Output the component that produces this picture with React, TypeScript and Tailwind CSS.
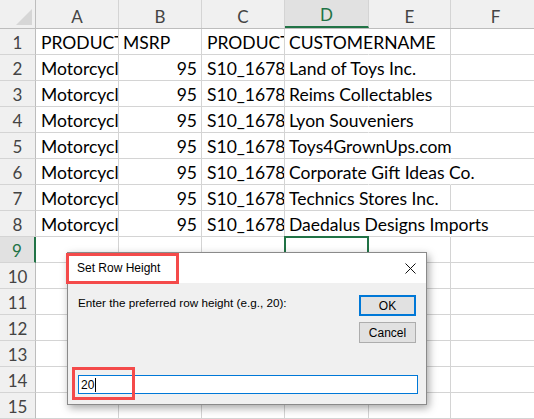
import React from "react";

const COLS = [
  { key: "A", w: "w-[83px]" },
  { key: "B", w: "w-[83px]" },
  { key: "C", w: "w-[83px]" },
  { key: "D", w: "w-[84px]" },
  { key: "E", w: "w-[82px]" },
  { key: "F", w: "w-[90px]" },
];

const CUSTOMERS = [
  "CUSTOMERNAME",
  "Land of Toys Inc.",
  "Reims Collectables",
  "Lyon Souveniers",
  "Toys4GrownUps.com",
  "Corporate Gift Ideas Co.",
  "Technics Stores Inc.",
  "Daedalus Designs Imports",
];

// rows where the customer name runs past column E into F
const OVER_F = [5, 6, 8];

const cellFont = { fontFamily: "Lato, 'Noto Sans', sans-serif" };

function Row({ n }: { n: number }) {
  const hasData = n <= 8;
  const header = n === 1;
  const selectedRow = n === 9;
  const cell = "shrink-0 flex items-end pb-[2px] text-[17.5px] leading-[18px] text-black whitespace-nowrap";
  return (
    <div className="flex h-[26px] shrink-0">
      <div
        className={`w-[36px] shrink-0 flex items-end justify-center pb-[2px] leading-[18px] text-[17px] border-b border-[#d4d4d4] ${
          selectedRow
            ? "bg-[#e1e1e1] text-[#217346] border-r-2 border-r-[#217346]"
            : "bg-[#f0f0f0] text-[#444] border-r border-r-[#bdbdbd]"
        }`}
      >
        {n}
      </div>
      {/* A */}
      <div className={`w-[83px] border-r border-b border-[#d4d4d4] overflow-hidden pl-[5px] ${cell}`}>
        {hasData ? (header ? "PRODUCTLINE" : "Motorcycles") : ""}
      </div>
      {/* B */}
      <div
        className={`w-[83px] border-r border-b border-[#d4d4d4] overflow-hidden ${cell} ${
          header ? "justify-start pl-[4px]" : "justify-end pr-[4px]"
        }`}
      >
        {hasData ? (header ? "MSRP" : "95") : ""}
      </div>
      {/* C */}
      <div className={`w-[83px] border-r border-b border-[#d4d4d4] overflow-hidden pl-[5px] ${cell}`}>
        {hasData ? (header ? "PRODUCTCODE" : "S10_1678") : ""}
      </div>
      {/* D */}
      <div
        className={`relative w-[84px] border-b border-[#d4d4d4] pl-[4px] ${cell} ${
          hasData ? "border-r border-r-transparent" : "border-r border-r-[#d4d4d4]"
        }`}
      >
        {hasData && <span className="relative z-10">{CUSTOMERS[n - 1]}</span>}
        {selectedRow && (
          <div className="absolute -left-[1px] -top-[1px] w-[85px] h-[27px] border-2 border-[#217346]" />
        )}
      </div>
      {/* E */}
      <div
        className={`w-[82px] shrink-0 border-b border-[#d4d4d4] ${
          OVER_F.includes(n) ? "border-r border-r-transparent" : "border-r border-r-[#d4d4d4]"
        }`}
      />
      {/* F */}
      <div className="w-[90px] shrink-0 border-r border-b border-[#d4d4d4]" />
    </div>
  );
}

function Dialog() {
  return (
    <div
      className="absolute left-[67px] top-[252px] w-[360px] h-[153px] border border-[#8a8a8a] bg-[#f0f0f0] shadow-[2px_3px_8px_rgba(0,0,0,0.35)] flex flex-col"
      style={{ fontFamily: "'Liberation Sans', Arial, sans-serif" }}
    >
      <div className="h-[30px] shrink-0 bg-white flex items-center justify-between pl-[9px] pr-[9px]">
        <span className="text-[12px] text-black">Set Row Height</span>
        <svg width="11" height="11" viewBox="0 0 11 11" className="mr-[1px]">
          <path d="M0.5 0.5 L10.5 10.5 M10.5 0.5 L0.5 10.5" stroke="#111" strokeWidth="1" />
        </svg>
      </div>
      <div className="flex-1 flex flex-col px-[9px]">
        <div className="flex justify-between pt-[12px]">
          <span className="text-[11.7px] leading-[16px] text-black mt-0 ml-[1px]">
            Enter the preferred row height (e.g., 20):
          </span>
          <div className="flex flex-col gap-[6px] mr-[1px]">
            <div className="w-[57px] h-[21px] border-2 border-[#0078d7] bg-[#e1e1e1] flex items-center justify-center text-[12px] text-black">
              OK
            </div>
            <div className="w-[57px] h-[21px] border border-[#adadad] bg-[#e1e1e1] flex items-center justify-center text-[12px] text-black">
              Cancel
            </div>
          </div>
        </div>
        <div className="mt-[32px] ml-[1px] w-[340px] h-[19px] border border-[#0078d7] bg-white flex items-center pl-[2px] text-[12px] text-black">
          20<span className="inline-block w-[1px] h-[14px] bg-black ml-[1px]" />
        </div>
      </div>
    </div>
  );
}

export default function App() {
  return (
    <div className="relative w-[534px] h-[419px] overflow-hidden bg-white" style={cellFont}>
      {/* column headers */}
      <div className="flex h-[29px] bg-[#f0f0f0] border-b border-[#bdbdbd]">
        <div className="relative w-[36px] shrink-0 border-r border-[#bdbdbd]">
          <svg className="absolute right-[3px] bottom-[3px]" width="16" height="16" viewBox="0 0 16 16">
            <polygon points="16,0 16,16 0,16" fill="#d6d6d6" />
          </svg>
        </div>
        {COLS.map((c) => (
          <div
            key={c.key}
            className={`${c.w} shrink-0 flex items-end pb-[2px] leading-[18px] justify-center text-[17px] border-r border-[#d4d4d4] ${
              c.key === "D"
                ? "bg-[#e1e1e1] text-[#217346] border-b-2 border-b-[#217346]"
                : "text-[#444]"
            }`}
          >
            {c.key}
          </div>
        ))}
      </div>
      {Array.from({ length: 15 }, (_, i) => (
        <Row key={i} n={i + 1} />
      ))}

      <Dialog />

      {/* red annotation boxes */}
      <div className="absolute left-[66px] top-[253px] w-[113px] h-[31px] border-[3px] border-[#f44a4a]" />
      <div className="absolute left-[72px] top-[367px] w-[63px] h-[33px] border-[3px] border-[#f44a4a]" />
    </div>
  );
}
